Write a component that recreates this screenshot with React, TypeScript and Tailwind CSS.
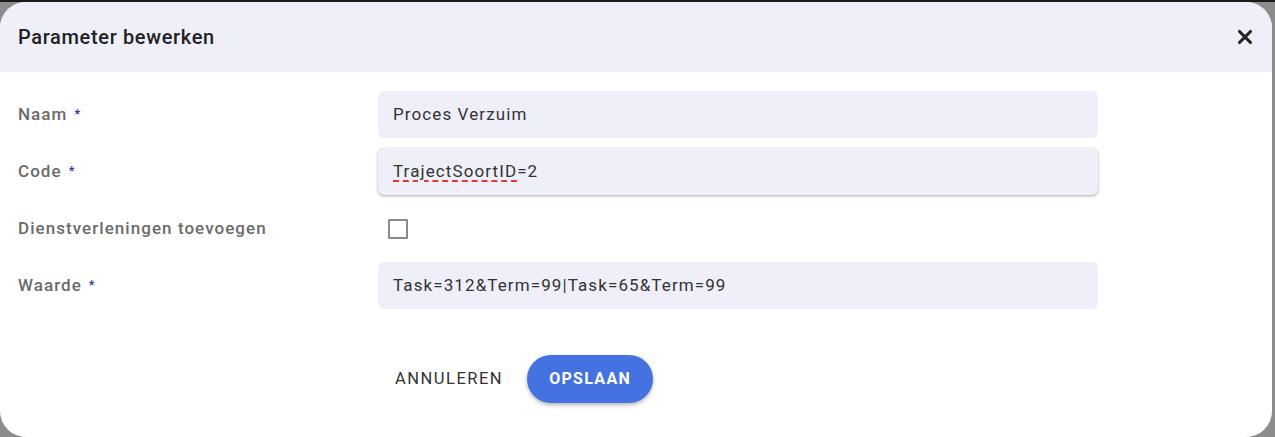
import React from "react";
import { X } from "lucide-react";

const Label = ({ text, required }: { text: string; required?: boolean }) => (
  <div className="w-[378px] shrink-0 pl-[18px] text-[17px] tracking-[1.05px] font-medium text-[#6b6b6b]">
    {text}
    {required && (
      <span className="ml-[7px] relative -top-[2px] text-[13px] text-[#1e3a8a]">*</span>
    )}
  </div>
);

const Field = ({
  label,
  required,
  children,
}: {
  label: string;
  required?: boolean;
  children: React.ReactNode;
}) => (
  <div className="flex items-center h-[47px]">
    <Label text={label} required={required} />
    {children}
  </div>
);

const inputCls =
  "w-[720px] h-[47px] rounded-[6px] bg-[#efeff9] flex items-center px-[15px] text-[17px] tracking-[1.1px] text-[#333]";

const App = () => {
  return (
    <div
      className="w-[1275px] h-[437px] bg-[#8c8c8c] overflow-hidden"
      style={{ fontFamily: "Roboto, 'Liberation Sans', sans-serif" }}
    >
      <div className="h-[2px] bg-[#1c1c1c]" />
      <div className="w-[1272px] h-[435px] bg-white rounded-[26px] overflow-hidden flex flex-col">
        <div className="h-[70px] bg-[#efeff9] flex items-center justify-between pl-[18px] pr-[16px] shrink-0">
          <h1 className="text-[20px] tracking-[0.65px] font-medium text-[#222]">Parameter bewerken</h1>
          <button className="text-[#222]">
            <X size={22} strokeWidth={3.4} />
          </button>
        </div>

        <div className="flex flex-col gap-[10px] pt-[19px]">
          <Field label="Naam" required>
            <div className={inputCls}>Proces Verzuim</div>
          </Field>
          <Field label="Code" required>
            <div className={`${inputCls} shadow-[0_1px_3px_rgba(0,0,0,0.35)]`}>
              <span className="underline decoration-dashed decoration-[#e33] decoration-2 underline-offset-[4px]">
                TrajectSoortID
              </span>
              =2
            </div>
          </Field>
          <Field label="Dienstverleningen toevoegen">
            <div className="ml-[10px] w-[20px] h-[20px] border-2 border-[#8a8a8a] rounded-[1px] bg-white" />
          </Field>
          <Field label="Waarde" required>
            <div className={inputCls}>Task=312&amp;Term=99|Task=65&amp;Term=99</div>
          </Field>
        </div>

        <div className="flex items-center pl-[379px] pt-[46px] gap-[8px]">
          <button className="h-[48px] px-[16px] text-[16.5px] tracking-[1.5px] text-[#333]">
            ANNULEREN
          </button>
          <button className="h-[48px] w-[126px] rounded-full bg-[#4472e0] text-white text-[16px] font-bold tracking-[1.3px] shadow-[0_2px_4px_rgba(0,0,0,0.3)]">
            OPSLAAN
          </button>
        </div>
      </div>
    </div>
  );
};

export default App;
